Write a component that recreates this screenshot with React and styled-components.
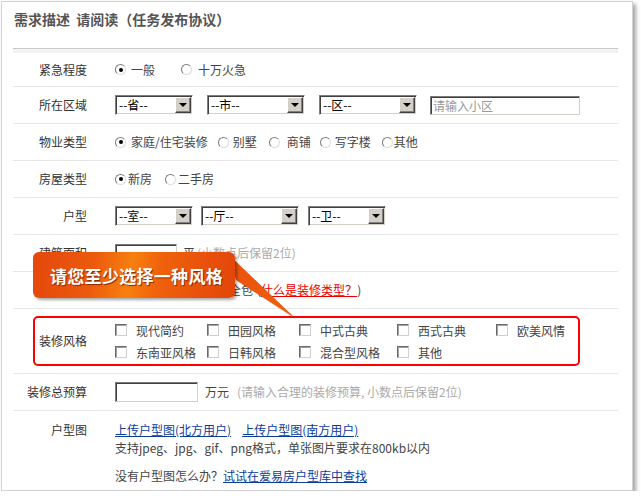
import React from 'react';
import styled, { createGlobalStyle } from 'styled-components';

const GlobalStyle = createGlobalStyle`
  html, body {
    margin: 0;
    padding: 0;
    background: #fff;
  }
  body {
    font-family: "Noto Sans CJK SC", "Liberation Sans", sans-serif;
    font-size: 12px;
    color: #333;
  }
`;

const Card = styled.div`
  position: relative;
  margin: 1px 0 0 1px;
  width: 630px;
  height: 488px;
  border: 1px solid #d2d2d2;
  box-shadow: 3px 3px 4px rgba(0, 0, 0, 0.35);
  background: #fff;
`;

const Header = styled.div`
  margin: 0 14px 0 11px;
  padding: 9px 0 0 1px;
  height: 37px;
  border-bottom: 1px solid #c8c8c8;
`;

const Title = styled.h2`
  margin: 0;
  font-size: 14px;
  line-height: 16px;
  font-weight: bold;
  color: #555;
`;

const Band = styled.div`
  margin: 0 14px 0 11px;
  height: 4px;
  background: #f2f2f2;
`;

const Form = styled.div`
  margin: 0 14px 0 11px;
`;

const Row = styled.div`
  display: flex;
  align-items: ${({ $top }) => ($top ? 'flex-start' : 'center')};
  height: ${({ $h }) => $h || 36}px;
  padding-top: ${({ $top }) => ($top ? 10 : 0)}px;
  box-sizing: border-box;
  border-bottom: ${({ $last }) => ($last ? 'none' : '1px solid #e6e6e6')};
  box-sizing: content-box;
`;

const Label = styled.div`
  flex-shrink: 0;
  width: ${({ $w }) => $w || 74}px;
  padding-right: 28px;
  text-align: right;
  line-height: 18px;
  color: #333;
`;

const Controls = styled.div`
  display: flex;
  align-items: center;
  color: #444;
  line-height: 18px;
`;

const RadioOption = styled.label`
  display: inline-flex;
  align-items: center;
  gap: ${({ $gap }) => $gap}px;
  margin-right: ${({ $mr }) => $mr}px;
  white-space: nowrap;
`;

const RadioDot = styled.span`
  display: inline-flex;
  align-items: center;
  justify-content: center;
  flex-shrink: 0;
  width: 11px;
  height: 11px;
  box-sizing: border-box;
  border-radius: 50%;
  border: 1px solid;
  border-color: #7c7c7c #dcdcdc #dcdcdc #7c7c7c;
  background: #fff;

  &::after {
    content: '';
    width: 4px;
    height: 4px;
    border-radius: 50%;
    background: ${({ $on }) => ($on ? '#000' : 'transparent')};
  }
`;

const SelectBox = styled.div`
  display: inline-flex;
  align-items: center;
  width: ${({ $w }) => $w}px;
  height: 20px;
  margin-right: ${({ $mr }) => $mr || 0}px;
  padding: 2px;
  box-sizing: border-box;
  border: 1px solid;
  border-color: #808080 #fff #fff #808080;
  box-shadow: inset 1px 1px 0 #404040, inset -1px -1px 0 #d4d0c8;
  background: #fff;
`;

const SelectText = styled.span`
  flex: 1;
  padding-left: 1px;
  font-size: 12px;
  line-height: 14px;
  color: #000;
`;

const SelectButton = styled.span`
  display: flex;
  align-items: center;
  justify-content: center;
  width: 16px;
  height: 16px;
  margin-right: -1px;
  box-sizing: border-box;
  border: 1px solid;
  border-color: #fff #404040 #404040 #fff;
  box-shadow: inset -1px -1px 0 #808080;
  background: #d4d0c8;

  &::after {
    content: '';
    border-left: 4px solid transparent;
    border-right: 4px solid transparent;
    border-top: 4px solid #000;
  }
`;

const TextInput = styled.input`
  width: ${({ $w }) => $w}px;
  height: ${({ $h }) => $h || 19}px;
  margin: 0 ${({ $mr }) => $mr || 0}px 0 ${({ $ml }) => $ml || 0}px;
  padding: 0 2px;
  box-sizing: border-box;
  border: 1px solid;
  border-color: #7a7a7a #d4d0c8 #d4d0c8 #7a7a7a;
  box-shadow: inset 1px 1px 0 #404040;
  font-family: "Noto Sans CJK SC", sans-serif;
  font-size: 12px;
  color: #333;
  outline: none;

  &::placeholder {
    color: #999;
  }
`;

const Hint = styled.span`
  margin-left: ${({ $ml }) => $ml || 0}px;
  color: #aaa;
`;

const Unit = styled.span`
  color: #444;
`;

const RedLink = styled.a`
  color: #e00;
  text-decoration: underline;
`;

const StyleBox = styled.div`
  display: flex;
  align-items: center;
  width: 547px;
  height: 50px;
  margin-left: 20px;
  box-sizing: border-box;
  border: 2px solid #f00;
  border-radius: 5px;
`;

const StyleGrid = styled.div`
  display: grid;
  grid-template-columns: 92px 92px 98px 99px auto;
  grid-auto-rows: 22px;
  padding: 1px 0;
  color: #444;
`;

const CheckItem = styled.label`
  display: flex;
  align-items: center;
  gap: 9px;
  white-space: nowrap;
`;

const CheckBox = styled.span`
  flex-shrink: 0;
  width: 12px;
  height: 12px;
  box-sizing: border-box;
  border: 1px solid;
  border-color: #6a6a6a #cfcfcf #cfcfcf #6a6a6a;
  box-shadow: inset 1px 1px 0 #a0a0a0;
  background: #fff;
`;

const UploadBody = styled.div`
  display: flex;
  flex-direction: column;
  color: #444;
  line-height: 18px;
`;

const LinkLine = styled.div`
  display: flex;
  gap: 11px;
`;

const BlueLink = styled.a`
  color: #0b3c9d;
  text-decoration: underline;
`;

const Note = styled.div`
  margin-top: ${({ $mt }) => $mt || 0}px;
`;

const Tooltip = styled.div`
  position: absolute;
  left: 31px;
  top: 250px;
  width: 202px;
  height: 46px;
  box-sizing: border-box;
  padding-left: 17px;
  display: flex;
  align-items: center;
  border-radius: 6px;
  background: linear-gradient(
    100deg,
    #e4470b 0%,
    #ec5a0d 30%,
    #f7800f 48%,
    #ef610c 62%,
    #e2450a 100%
  );
  box-shadow: 2px 2px 3px rgba(0, 0, 0, 0.35);
  color: #fff;
  font-size: 17px;
  font-weight: bold;
  letter-spacing: 0.3px;
  text-shadow: 1px 1px 1px #8a2a00;
  z-index: 2;
`;

const TooltipTail = styled.svg`
  position: absolute;
  left: 220px;
  top: 248px;
  z-index: 1;
  overflow: visible;
`;

const Select = ({ w, mr, text }) => (
  <SelectBox $w={w} $mr={mr}>
    <SelectText>{text}</SelectText>
    <SelectButton />
  </SelectBox>
);

const RadioGroup = ({ items }) => (
  <Controls>
    {items.map((it) => (
      <RadioOption key={it.text} $gap={it.gap} $mr={it.mr}>
        <RadioDot $on={it.on} />
        {it.text}
      </RadioOption>
    ))}
  </Controls>
);

const styles = [
  '现代简约', '田园风格', '中式古典', '西式古典', '欧美风情',
  '东南亚风格', '日韩风格', '混合型风格', '其他',
];

const App = () => (
  <>
    <GlobalStyle />
    <Card>
      <Header>
        <Title>需求描述&nbsp;&nbsp;请阅读（任务发布协议）</Title>
      </Header>
      <Band />
      <Form>
        <Row $h={33}>
          <Label>紧急程度</Label>
          <RadioGroup
            items={[
              { text: '一般', on: true, gap: 5, mr: 26 },
              { text: '十万火急', gap: 6, mr: 0 },
            ]}
          />
        </Row>
        <Row>
          <Label>所在区域</Label>
          <Controls>
            <Select w={78} mr={14} text="--省--" />
            <Select w={98} mr={14} text="--市--" />
            <Select w={98} mr={13} text="--区--" />
            <TextInput $w={150} placeholder="请输入小区" />
          </Controls>
        </Row>
        <Row>
          <Label>物业类型</Label>
          <RadioGroup
            items={[
              { text: '家庭/住宅装修', on: true, gap: 5, mr: 10 },
              { text: '别墅', gap: 4, mr: 12 },
              { text: '商铺', gap: 7, mr: 9 },
              { text: '写字楼', gap: 4, mr: 11 },
              { text: '其他', gap: 1, mr: 0 },
            ]}
          />
        </Row>
        <Row>
          <Label>房屋类型</Label>
          <RadioGroup
            items={[
              { text: '新房', on: true, gap: 2, mr: 13 },
              { text: '二手房', gap: 2, mr: 0 },
            ]}
          />
        </Row>
        <Row>
          <Label>户型</Label>
          <Controls>
            <Select w={78} mr={8} text="--室--" />
            <Select w={98} mr={9} text="--厅--" />
            <Select w={78} text="--卫--" />
          </Controls>
        </Row>
        <Row>
          <Label>建筑面积</Label>
          <Controls>
            <TextInput $w={62} $mr={6} />
            <Unit>平</Unit>
            <Hint $ml={2}>(小数点后保留2位)</Hint>
          </Controls>
        </Row>
        <Row>
          <Label>装修类型</Label>
          <Controls>
            <RadioOption $gap={2} $mr={13}>
              <RadioDot $on />
              半包
            </RadioOption>
            <RadioOption $gap={2} $mr={12}>
              <RadioDot />
              清包
            </RadioOption>
            <RadioOption $gap={4} $mr={4}>
              <RadioDot />
              全包
            </RadioOption>
            (<RedLink href="#type">什么是装修类型？</RedLink>)
          </Controls>
        </Row>
        <Row $h={64}>
          <StyleBox>
            <Label $w={52}>装修风格</Label>
            <StyleGrid>
              {styles.map((s) => (
                <CheckItem key={s}>
                  <CheckBox />
                  {s}
                </CheckItem>
              ))}
            </StyleGrid>
          </StyleBox>
        </Row>
        <Row>
          <Label>装修总预算</Label>
          <Controls>
            <TextInput $w={83} $h={20} $mr={7} />
            <Unit>万元</Unit>
            <Hint $ml={8}>(请输入合理的装修预算, 小数点后保留2位)</Hint>
          </Controls>
        </Row>
        <Row $top $h={80} $last>
          <Label>户型图</Label>
          <UploadBody>
            <LinkLine>
              <BlueLink href="#north">上传户型图(北方用户)</BlueLink>
              <BlueLink href="#south">上传户型图(南方用户)</BlueLink>
            </LinkLine>
            <Note>支持jpeg、jpg、gif、png格式，单张图片要求在800kb以内</Note>
            <Note $mt={10}>
              没有户型图怎么办？<BlueLink href="#lib">试试在爱易房户型库中查找</BlueLink>
            </Note>
          </UploadBody>
        </Row>
      </Form>
      <TooltipTail width="80" height="75" viewBox="0 0 80 75">
        <defs>
          <linearGradient id="tail" x1="0" y1="0" x2="1" y2="1">
            <stop offset="0" stopColor="#e8500c" />
            <stop offset="1" stopColor="#f0600e" />
          </linearGradient>
        </defs>
        <polygon points="6,4 14,30 74,69" fill="rgba(0,0,0,0.18)" transform="translate(1.5,1.5)" />
        <polygon points="6,4 14,30 73,68" fill="url(#tail)" />
      </TooltipTail>
      <Tooltip>请您至少选择一种风格</Tooltip>
    </Card>
  </>
);

export default App;
